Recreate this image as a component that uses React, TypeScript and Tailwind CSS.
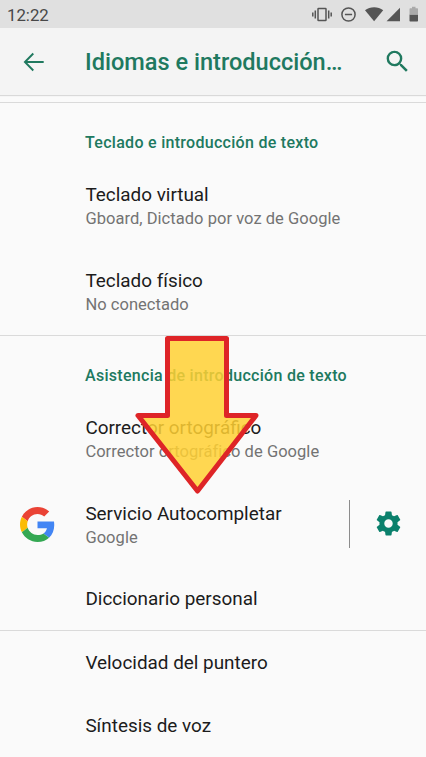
import type { ReactNode } from "react";

function StatusBar() {
  return (
    <div className="flex h-7 items-center bg-[#e0e0e0] pl-[7px] text-[#4f4f4f]">
      <span className="flex-1 pt-px text-[16.8px] leading-5 text-[#484848]">12:22</span>
      <svg width="114" height="28" viewBox="312 0 114 28" fill="none" stroke="#555" strokeWidth="1.5">
        {/* vibrate */}
        <rect x="318" y="8.5" width="8" height="12" rx="0.6" />
        <path d="M315.3 10.5v8M312.8 12.5v4M328.7 10.5v8M331.2 12.5v4" />
        {/* do not disturb */}
        <circle cx="348.5" cy="14.5" r="6.6" />
        <path d="M344.9 14.5h7.2" />
        {/* wifi, signal, battery */}
        <g fill="#555" stroke="none">
          <path d="M365 10.2c5-4 13.2-4 18.2 0L374.1 21.3z" />
          <path d="M400 7.8v13.4h-13.4z" />
          <path d="M409.5 14.5h8.5v6.3q0 .7-.7.7h-7.1q-.7 0-.7-.7z" />
        </g>
        <path d="M409.5 14.5v-5.5q0-.7.7-.7h1.8v-1.6h3.5v1.6h1.8q.7 0 .7.7v5.5z" fill="#aaa" stroke="none" />
      </svg>
    </div>
  );
}

function AppBar() {
  return (
    <header className="flex h-[67px] items-center bg-[#f4f4f4] text-[#20795f] shadow-[0_1px_1px_#d9d9d9]">
      <div className="flex w-[85px] pl-[23px]">
        <svg width="22" height="20" viewBox="0 0 22 20" fill="none" stroke="currentColor" strokeWidth="1.9">
          <path d="M20.7 10H2.2M10.3 1.5L1.9 10l8.4 8.5" />
        </svg>
      </div>
      <h1 className="flex-1 pt-px text-[23.55px] leading-8 font-medium whitespace-nowrap">Idiomas e introducción…</h1>
      <svg className="mr-[14px]" width="29" height="29" viewBox="0 0 24 24" fill="currentColor">
        <path d="M15.5 14h-.79l-.28-.27A6.471 6.471 0 0 0 16 9.5 6.5 6.5 0 1 0 9.5 16c1.61 0 3.09-.59 4.23-1.57l.27.28v.79l5 4.99L20.49 19l-4.99-5zm-6 0C7.01 14 5 11.99 5 9.5S7.01 5 9.5 5 14 7.01 14 9.5 11.99 14 9.5 14z" />
      </svg>
    </header>
  );
}

function SectionHeader({ children }: { children: ReactNode }) {
  return (
    <h2 className="flex h-[59.5px] items-center pt-[21px] pl-[85px] text-[16px] leading-5 font-medium tracking-[0.29px] text-[#20795f]">
      {children}
    </h2>
  );
}

type ItemProps = {
  title: string;
  summary?: string;
  icon?: ReactNode;
  action?: ReactNode;
};

function Item({ title, summary, icon, action }: ItemProps) {
  return (
    <div className={summary ? "flex h-[86px] items-center" : "flex h-[63px] items-center"}>
      <div className="w-[85px] shrink-0 pl-5">{icon}</div>
      <div className="flex-1 pt-px pl-[0.4px] whitespace-nowrap">
        <div className="text-[18.9px] leading-[26px] text-[#1c1c1c]">{title}</div>
        {summary && <div className="text-[16.5px] leading-[22px] tracking-[0.04px] text-[#737373]">{summary}</div>}
      </div>
      {action}
    </div>
  );
}

function GoogleLogo() {
  return (
    <svg width="35" height="35" viewBox="0 0 48 48">
      <path fill="#EA4335" d="M24 9.5c3.54 0 6.71 1.22 9.21 3.6l6.85-6.85C35.9 2.38 30.47 0 24 0 14.62 0 6.51 5.38 2.56 13.22l7.98 6.19C12.43 13.72 17.74 9.5 24 9.5z" />
      <path fill="#4285F4" d="M46.98 24.55c0-1.57-.15-3.09-.38-4.55H24v9.02h12.94c-.58 2.96-2.26 5.48-4.78 7.18l7.73 6c4.51-4.18 7.09-10.36 7.09-17.65z" />
      <path fill="#FBBC05" d="M10.53 28.59c-.48-1.45-.76-2.99-.76-4.59s.27-3.14.76-4.59l-7.98-6.19C.92 16.46 0 20.12 0 24c0 3.88.92 7.54 2.56 10.78l7.97-6.19z" />
      <path fill="#34A853" d="M24 48c6.48 0 11.93-2.13 15.89-5.81l-7.73-6c-2.15 1.45-4.92 2.3-8.16 2.3-6.26 0-11.57-4.22-13.47-9.91l-7.98 6.19C6.51 42.62 14.62 48 24 48z" />
    </svg>
  );
}

function SettingsAction() {
  return (
    <div className="mb-px flex h-12 w-[77px] items-center justify-center border-l border-[#8c8c8c]">
      <svg width="29" height="29" viewBox="0 0 24 24" fill="#0b806c">
        <path d="M19.43 12.98c.04-.32.07-.64.07-.98s-.03-.66-.07-.98l2.11-1.65c.19-.15.24-.42.12-.64l-2-3.46c-.12-.22-.39-.3-.61-.22l-2.49 1c-.52-.4-1.08-.73-1.69-.98l-.38-2.65C14.46 2.18 14.25 2 14 2h-4c-.25 0-.46.18-.49.42l-.38 2.65c-.61.25-1.17.59-1.69.98l-2.49-1c-.23-.09-.49 0-.61.22l-2 3.46c-.13.22-.07.49.12.64l2.11 1.65c-.04.32-.07.65-.07.98s.03.66.07.98l-2.11 1.65c-.19.15-.24.42-.12.64l2 3.46c.12.22.39.3.61.22l2.49-1c.52.4 1.08.73 1.69.98l.38 2.65c.03.24.24.42.49.42h4c.25 0 .46-.18.49-.42l.38-2.65c.61-.25 1.17-.59 1.69-.98l2.49 1c.23.09.49 0 .61-.22l2-3.46c.12-.22.07-.49-.12-.64l-2.11-1.65zM12 15.5c-1.93 0-3.5-1.57-3.5-3.5s1.57-3.5 3.5-3.5 3.5 1.57 3.5 3.5-1.57 3.5-3.5 3.5z" />
      </svg>
    </div>
  );
}

function PointerArrow() {
  return (
    <svg className="absolute top-[330px] left-[130px]" width="136" height="170" viewBox="130 330 136 170">
      <path
        d="M167.5 338.5H226.5V415.5H256L197.5 491L138 415.5H167.5z"
        fill="#ffd033"
        fillOpacity="0.85"
        stroke="#de2427"
        strokeWidth="5"
        strokeLinejoin="round"
      />
    </svg>
  );
}

export default function App() {
  return (
    <div className="relative h-[757px] w-[426px] overflow-hidden bg-[#fafafa] font-[Roboto,sans-serif]">
      <StatusBar />
      <AppBar />
      <main className="pt-[7px]">
        <section className="border-t border-[#dadada]">
          <SectionHeader>Teclado e introducción de texto</SectionHeader>
          <Item title="Teclado virtual" summary="Gboard, Dictado por voz de Google" />
          <Item title="Teclado físico" summary="No conectado" />
        </section>
        <section className="border-t border-[#dadada]">
          <SectionHeader>Asistencia de introducción de texto</SectionHeader>
          <Item title="Corrector ortográfico" summary="Corrector ortográfico de Google" />
          <Item title="Servicio Autocompletar" summary="Google" icon={<GoogleLogo />} action={<SettingsAction />} />
          <Item title="Diccionario personal" />
        </section>
        <section className="border-t border-[#dadada]">
          <Item title="Velocidad del puntero" />
          <Item title="Síntesis de voz" />
        </section>
      </main>
      <PointerArrow />
    </div>
  );
}
